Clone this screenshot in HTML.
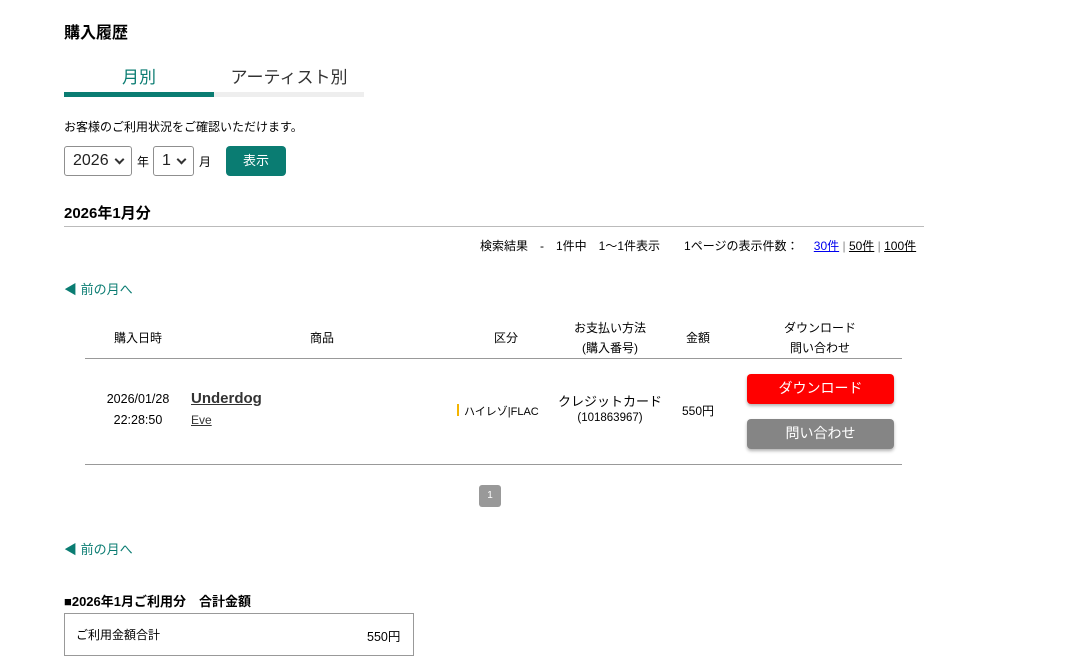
<!DOCTYPE html>
<html><head><meta charset="utf-8"><style>
*{margin:0;padding:0;box-sizing:border-box}
body{width:1090px;height:671px;background:#fff;font-family:"Liberation Sans","Noto Sans CJK JP",sans-serif;color:#000;position:relative;overflow:hidden;font-size:12px}
.a{position:absolute;white-space:nowrap}
.c{text-align:center}
.sel{position:absolute;border:1px solid #8f8f8f;border-radius:3px;height:30px;font-size:16px;line-height:28px;padding-left:8px;color:#222}
.sel:after{content:"";position:absolute;right:8px;top:9px;width:5px;height:5px;border-right:2px solid #333;border-bottom:2px solid #333;transform:rotate(45deg)}
a{color:#000;text-decoration:underline}
.teal{color:#0a7c72}
</style></head><body>
<div class="a" style="left:64px;top:19px;font-size:16px;font-weight:bold">購入履歴</div>
<div class="a c teal" style="left:64px;top:63px;width:150px;font-size:17px">月別</div>
<div class="a c" style="left:214px;top:63px;width:150px;font-size:17px;color:#333">アーティスト別</div>
<div class="a" style="left:64px;top:92px;width:150px;height:5px;background:#0a7c72"></div>
<div class="a" style="left:214px;top:92px;width:150px;height:5px;background:#eee"></div>
<div class="a" style="left:64px;top:118px">お客様のご利用状況をご確認いただけます。</div>
<div class="sel" style="left:64px;top:146px;width:68px">2026</div>
<div class="a" style="left:137px;top:153px">年</div>
<div class="sel" style="left:153px;top:146px;width:41px">1</div>
<div class="a" style="left:199px;top:153px">月</div>
<div class="a c" style="left:226px;top:146px;width:60px;height:30px;background:#0a7c72;border-radius:4px;color:#fff;line-height:30px;font-size:13px">表示</div>
<div class="a" style="left:64px;top:202px;font-size:15px;font-weight:bold">2026年1月分</div>
<div class="a" style="left:64px;top:226px;width:860px;height:1px;background:#bbb"></div>
<div class="a" style="left:480px;top:237px">検索結果　-　1件中　1〜1件表示　　1ページの表示件数：　 <a style="color:#00e">30件</a><span style="color:#888"> | </span><a>50件</a><span style="color:#888"> | </span><a>100件</a></div>
<div class="a teal" style="left:64px;top:279px;font-size:13px">◀ 前の月へ</div>
<div class="a c" style="left:100px;top:329px;width:76px">購入日時</div>
<div class="a c" style="left:290px;top:329px;width:64px">商品</div>
<div class="a c" style="left:480px;top:329px;width:52px">区分</div>
<div class="a c" style="left:555px;top:318px;width:110px;line-height:20px">お支払い方法<br>(購入番号)</div>
<div class="a c" style="left:676px;top:329px;width:44px">金額</div>
<div class="a c" style="left:760px;top:318px;width:120px;line-height:20px">ダウンロード<br>問い合わせ</div>
<div class="a" style="left:85px;top:358px;width:817px;height:1px;background:#999"></div>
<div class="a c" style="left:96px;top:389px;width:84px;line-height:21px;font-size:12.5px">2026/01/28<br>22:28:50</div>
<div class="a" style="left:191px;top:390px;font-size:15px;font-weight:bold;text-decoration:underline;color:#333">Underdog</div>
<div class="a" style="left:191px;top:413px;text-decoration:underline;color:#333">Eve</div>
<div class="a" style="left:457px;top:404px;width:2px;height:12px;background:#f4b400"></div>
<div class="a" style="left:464px;top:403px;font-size:11px">ハイレゾ|FLAC</div>
<div class="a c" style="left:555px;top:391px;width:110px;font-size:13px">クレジットカード</div>
<div class="a c" style="left:555px;top:412px;width:110px;font-size:11.5px">(101863967)</div>
<div class="a c" style="left:676px;top:402px;width:44px">550円</div>
<div class="a c" style="left:747px;top:374px;width:147px;height:30px;background:#f00;color:#fff;border-radius:4px;line-height:28px;font-size:14px;box-shadow:0 2px 3px rgba(0,0,0,.3)">ダウンロード</div>
<div class="a c" style="left:747px;top:419px;width:147px;height:30px;background:#858585;color:#fff;border-radius:4px;line-height:28px;font-size:14px;box-shadow:0 2px 3px rgba(0,0,0,.3)">問い合わせ</div>
<div class="a" style="left:85px;top:464px;width:817px;height:1px;background:#999"></div>
<div class="a c" style="left:479px;top:485px;width:22px;height:22px;background:#999;color:#fff;border-radius:3px;line-height:22px;font-size:10px">1</div>
<div class="a teal" style="left:64px;top:539px;font-size:13px">◀ 前の月へ</div>
<div class="a" style="left:64px;top:591px;font-size:13px;font-weight:bold">■2026年1月ご利用分　合計金額</div>
<div class="a" style="left:64px;top:613px;width:350px;height:43px;border:1px solid #999"></div>
<div class="a" style="left:76px;top:626px">ご利用金額合計</div>
<div class="a" style="left:367px;top:626px;font-size:12.5px">550円</div>
</body></html>
